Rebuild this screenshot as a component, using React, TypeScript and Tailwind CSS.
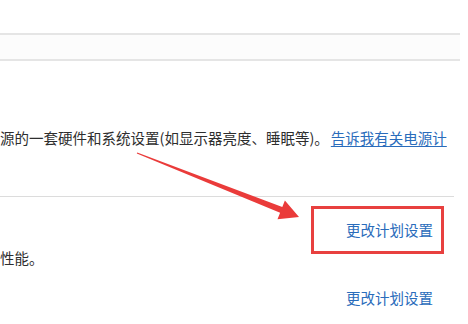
const PowerPlanHint = () => {
  return (
    <div
      className="relative w-[468px] h-[324px] overflow-hidden bg-white text-[#2e2e2e]"
      style={{ fontFamily: '"Noto Sans CJK SC", "Microsoft YaHei", sans-serif' }}
    >
      <div className="flex flex-col">
        <div className="h-[33px]" />
        <div className="w-[460px] h-[28px] border-y-2 border-[#e5e5e5] bg-[#fcfcfc]" />
        <div className="h-[69px]" />
        <p className="whitespace-nowrap text-[14.5px] leading-[16px]">
          源的一套硬件和系统设置(如显示器亮度、睡眠等)。
          <span className="ml-[2px] text-[#2a6cbb] underline underline-offset-2">告诉我有关电源计</span>
        </p>
        <div className="h-[50px]" />
        <div className="w-[454px] h-px bg-[#dcdcdc]" />
        <div className="h-[9px]" />
        <div className="flex justify-end pr-[24px]">
          <div className="flex w-[133px] h-[48px] items-center justify-end border-[3px] border-[#e8403f] pr-[8px]">
            <span className="whitespace-nowrap text-[14.5px] leading-[16px] text-[#2a6cbb]">更改计划设置</span>
          </div>
        </div>
        <p className="-mt-[4px] whitespace-nowrap text-[14.5px] leading-[16px]">性能。</p>
        <div className="h-[24px]" />
        <div className="flex justify-end pr-[35px]">
          <span className="whitespace-nowrap text-[14.5px] leading-[16px] text-[#2a6cbb]">更改计划设置</span>
        </div>
      </div>

      {/* red annotation arrow */}
      <svg className="absolute left-0 top-0 pointer-events-none" width="468" height="324" viewBox="0 0 468 324">
        <polygon
          points="137.2,152.4 282.3,207.1 284.9,200.6 299,217 277.5,219.2 280.1,212.7 136.8,153.6"
          fill="#ea3b3a"
        />
      </svg>
    </div>
  );
};

export default function App() {
  return <PowerPlanHint />;
}
